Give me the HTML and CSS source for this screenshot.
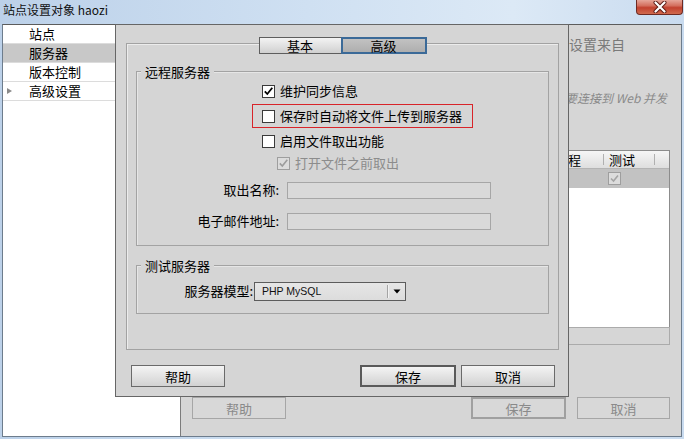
FILE: index.html
```html
<!DOCTYPE html>
<html lang="zh-CN">
<head>
<meta charset="utf-8">
<title>站点设置对象 haozi</title>
<link rel="stylesheet" href="styles.css">
</head>
<body>
<div class="window">
  <div class="titlebar">
    <span class="title">站点设置对象 haozi</span>
    <div class="close">
      <svg width="14" height="12" viewBox="0 0 14 12"><path d="M2.5 1.5 L11.5 10.5 M11.5 1.5 L2.5 10.5" stroke="#5a1a14" stroke-width="4" stroke-linecap="round"/><path d="M2.5 1.5 L11.5 10.5 M11.5 1.5 L2.5 10.5" stroke="#fff" stroke-width="2.2" stroke-linecap="round"/></svg>
    </div>
  </div>
  <div class="client">
    <ul class="sidebar">
      <li class="item">站点</li>
      <li class="item sel">服务器</li>
      <li class="item">版本控制</li>
      <li class="item"><span class="arrow"></span>高级设置</li>
    </ul>
    <div class="main">
      <p class="intro">此对话框的设置来自</p>
      <p class="note">如果要连接到 Web 并发</p>
      <div class="grid">
        <div class="ghead">
          <span class="gc c1"></span>
          <span class="gc c2"></span>
          <span class="gc c3"></span>
          <span class="gc c4">远程</span>
          <span class="gc c5">测试</span>
          <span class="gc c6"></span>
        </div>
        <div class="grow">
          <span class="gc c1"></span>
          <span class="gc c2"></span>
          <span class="gc c3"></span>
          <span class="gc c4"></span>
          <span class="gc c5"><span class="cb dis"><svg width="11" height="11" viewBox="0 0 11 11"><path d="M2 5.5 L4.5 8 L9 2.5" fill="none" stroke="#a4a4a4" stroke-width="1.6"/></svg></span></span>
        </div>
        <div class="gbody"></div>
      </div>
      <div class="tools"></div>
      <div class="mbuttons">
        <span class="mbtn b-help">帮助</span>
        <span class="spacer"></span>
        <span class="mbtn b-save">保存</span>
        <span class="mbtn b-cancel">取消</span>
      </div>
    </div>

    <div class="dialog">
      <div class="panel">
        <div class="tabs">
          <span class="tab">基本</span>
          <span class="tab active">高级</span>
        </div>
        <div class="group g1">
          <span class="legend">远程服务器</span>
          <div class="row r1 ind">
            <span class="cb"><svg width="11" height="11" viewBox="0 0 11 11"><path d="M1.8 5.4 L4.3 8 L9.3 1.8" fill="none" stroke="#000" stroke-width="1.8"/></svg></span>
            <span class="lbl">维护同步信息</span>
          </div>
          <div class="row r2">
            <span class="mark">
              <span class="cb"></span>
              <span class="lbl">保存时自动将文件上传到服务器</span>
            </span>
          </div>
          <div class="row r3 ind">
            <span class="cb"></span>
            <span class="lbl">启用文件取出功能</span>
          </div>
          <div class="row r4 ind2">
            <span class="cb dis"><svg width="11" height="11" viewBox="0 0 11 11"><path d="M1.8 5.4 L4.3 8 L9.3 1.8" fill="none" stroke="#9c9c9c" stroke-width="1.6"/></svg></span>
            <span class="lbl dtext">打开文件之前取出</span>
          </div>
          <div class="row r5">
            <span class="flabel">取出名称:</span>
            <span class="field"></span>
          </div>
          <div class="row r6">
            <span class="flabel">电子邮件地址:</span>
            <span class="field"></span>
          </div>
        </div>
        <div class="group g2">
          <span class="legend">测试服务器</span>
          <div class="row r7">
            <span class="flabel short">服务器模型:</span>
            <span class="select">
              <span class="sval">PHP MySQL</span>
              <span class="sarrow"><svg width="8" height="5" viewBox="0 0 8 5"><path d="M0.5 0.5 H7.5 L4 4.5 Z" fill="#000"/></svg></span>
            </span>
          </div>
        </div>
      </div>
      <div class="dbuttons">
        <span class="btn">帮助</span>
        <span class="spacer"></span>
        <span class="btn default">保存</span>
        <span class="btn">取消</span>
      </div>
    </div>
  </div>
</div>
</body>
</html>
```

FILE: styles.css
```css
* { box-sizing: border-box; margin: 0; padding: 0; }
html, body { width: 684px; height: 439px; overflow: hidden; }
body {
  font-family: "Noto Sans CJK SC", "Liberation Sans", sans-serif;
  font-size: 13px;
  color: #000;
  background: #c4d7ec;
}
.window {
  width: 684px;
  height: 439px;
  display: flex;
  flex-direction: column;
  padding: 0 2px 2px 2px;
  background: linear-gradient(to right, #bcd1e9 0%, #cfe0f2 45%, #dce9f6 75%, #c9dbef 100%);
}
.titlebar {
  height: 24px;
  display: flex;
  justify-content: space-between;
  align-items: flex-start;
}
.title {
  font-size: 12px;
  line-height: 14px;
  padding: 3px 0 0 1px;
  color: #111;
}
.close {
  width: 47px;
  height: 15px;
  margin-right: -1px;
  border: 1px solid #6e2a22;
  border-top: none;
  border-radius: 0 0 4px 4px;
  background: linear-gradient(#e6a69a 0%, #d4705f 40%, #c2412f 55%, #d06a4e 100%);
  display: flex;
  align-items: center;
  justify-content: center;
}
.close svg { margin-top: -1px; }

.client {
  flex: 1;
  display: flex;
  position: relative;
  border: 1px solid #6d7c8c;
  border-top-color: #5c5c5c;
  background: #d6d6d6;
}
.sidebar {
  list-style: none;
  width: 178px;
  background: #fff;
  border-right: 1px solid #7c7c7c;
}
.item {
  height: 19px;
  line-height: 18px;
  border-bottom: 1px solid #dcdcdc;
  padding-left: 26px;
  display: flex;
  align-items: center;
}
.item.sel { background: #c8c8c8; }
.arrow {
  width: 0;
  height: 0;
  margin-left: -22px;
  margin-right: 17px;
  border-left: 5px solid #8a8a8a;
  border-top: 3.5px solid transparent;
  border-bottom: 3.5px solid transparent;
}

.main {
  flex: 1;
  display: flex;
  flex-direction: column;
  padding: 0 11px;
}
.intro {
  margin-top: 9px;
  height: 20px;
  line-height: 20px;
  font-size: 14px;
  color: #7a7a7a;
  text-align: right;
  white-space: nowrap;
  padding-right: 45px;
}
.note {
  margin-top: 34px;
  height: 20px;
  line-height: 20px;
  font-size: 12px;
  font-style: italic;
  color: #8a8a8a;
  text-align: right;
  white-space: nowrap;
  padding-right: 3px;
}
.grid {
  margin: 42px 0 0 1px;
  height: 178px;
  border: 1px solid #8c8c8c;
  display: flex;
  flex-direction: column;
  background: #fff;
}
.ghead {
  height: 18px;
  display: flex;
  background: linear-gradient(#f6f6f6, #dedede);
  border-bottom: 1px solid #b4b4b4;
}
.grow {
  height: 19px;
  display: flex;
  background: #c2c2c2;
}
.gbody { flex: 1; background: #fff; }
.gc {
  display: flex;
  align-items: center;
  padding-left: 5px;
  line-height: 17px;
  white-space: nowrap;
  overflow: hidden;
}
.c1 { width: 160px; }
.c2 { width: 100px; }
.c3 { width: 96px; }
.c4 { width: 54px; }
.c5 { width: 51px; }
.c6 { flex: 1; }
.ghead .c4, .ghead .c5 { position: relative; }
.ghead .c4::after, .ghead .c5::after {
  content: "";
  position: absolute;
  right: 0;
  top: 3px;
  bottom: 3px;
  width: 1px;
  background: #b0b0b0;
  box-shadow: 1px 0 0 #fff;
}
.grow .c5 { padding-left: 4px; }
.tools {
  height: 18px;
  margin: -1px 0 0 1px;
  border: 1px solid #ababab;
}
.mbuttons {
  margin-top: 52px;
  display: flex;
  gap: 11px;
}
.mbtn {
  height: 22px;
  border: 1px solid #a6a6a6;
  color: #8a8a8a;
  display: flex;
  align-items: center;
  justify-content: center;
  background: #d8d8d8;
}
.b-help { width: 94px; }
.b-save { width: 95px; border: 2px solid #a0a0a0; }
.b-cancel { width: 93px; }
.spacer { flex: 1; }

/* dialog overlay */
.dialog {
  position: absolute;
  left: 112px;
  top: -1px;
  width: 454px;
  background: #d5d5d5;
  border: 1px solid #666;
  padding: 18px 9px 9px 10px;
}
.panel {
  border: 1px solid #a2a2a2;
  box-shadow: inset 1px 1px 0 #ececec;
  padding: 0 9px 35px 9px;
}
.tabs {
  display: flex;
  justify-content: center;
  margin-top: -7px;
  height: 17px;
}
.tab {
  height: 17px;
  line-height: 15px;
  display: flex;
  align-items: center;
  justify-content: center;
}
.tab:first-child {
  width: 83px;
  border: 1px solid #5e5e5e;
  background: linear-gradient(#f3f3f3, #d0d0d0);
}
.tab.active {
  width: 86px;
  margin-left: -1px;
  border: 2px solid #3b6a98;
  background: linear-gradient(#c2c2c2, #aeaeae);
}
.group {
  border: 1px solid #a3a3a3;
  box-shadow: inset 1px 1px 0 #e6e6e6;
}
.g1 { margin-top: 17px; padding-bottom: 14px; }
.g2 { margin-top: 19px; padding-bottom: 12px; }
.legend {
  display: block;
  width: fit-content;
  height: 16px;
  line-height: 16px;
  margin: -8px 0 0 4px;
  padding: 0 4px;
  background: #d5d5d5;
}
.row {
  height: 20px;
  display: flex;
  align-items: center;
}
.r1 { margin-top: 1px; }
.r2 { margin-top: 5px; }
.r3 { margin-top: 5px; }
.r4 { margin-top: 2px; }
.r5 { margin-top: 7px; }
.r6 { margin-top: 11px; }
.r7 { margin-top: 7px; }
.ind { padding-left: 125px; }
.ind2 { padding-left: 140px; }
.mark {
  margin-left: 115px;
  width: 221px;
  height: 24px;
  border: 1px solid #d8242a;
  padding-left: 9px;
  display: flex;
  align-items: center;
}
.cb {
  width: 13px;
  height: 13px;
  border: 1px solid #3a3a3a;
  background: #fff;
  display: flex;
  align-items: center;
  justify-content: center;
  flex: none;
}
.cb.dis {
  border-color: #9e9e9e;
  background: #dcdcdc;
}
.lbl {
  margin-left: 5px;
  line-height: 20px;
  white-space: nowrap;
}
.dtext { color: #8c8c8c; }
.flabel {
  width: 142px;
  text-align: right;
  white-space: nowrap;
  line-height: 20px;
}
.flabel.short { width: 116px; }
.field {
  margin-left: 8px;
  width: 204px;
  height: 17px;
  border: 1px solid #a6a6a6;
  background: #d9d9d9;
}
.select {
  margin-left: 1px;
  width: 152px;
  height: 19px;
  border: 1px solid #5c5c5c;
  background: linear-gradient(#e6e6e6, #dcdcdc);
  display: flex;
  align-items: center;
}
.sval {
  flex: 1;
  padding-left: 7px;
  font-family: "Liberation Sans", "DejaVu Sans", sans-serif;
  font-size: 10.5px;
  color: #111;
}
.sarrow {
  width: 18px;
  height: 13px;
  border-left: 1px solid #a4a4a4;
  box-shadow: inset 1px 0 0 #f2f2f2;
  display: flex;
  align-items: center;
  justify-content: center;
}
.dbuttons {
  margin-top: 15px;
  display: flex;
  gap: 5px;
  padding: 0 4px 0 5px;
}
.btn {
  width: 94px;
  height: 22px;
  border: 1px solid #6a6a6a;
  background: linear-gradient(#f4f4f4, #d2d2d2);
  display: flex;
  align-items: center;
  justify-content: center;
}
.btn.default {
  width: 96px;
  border: 2px solid #5a5a5a;
}
```
